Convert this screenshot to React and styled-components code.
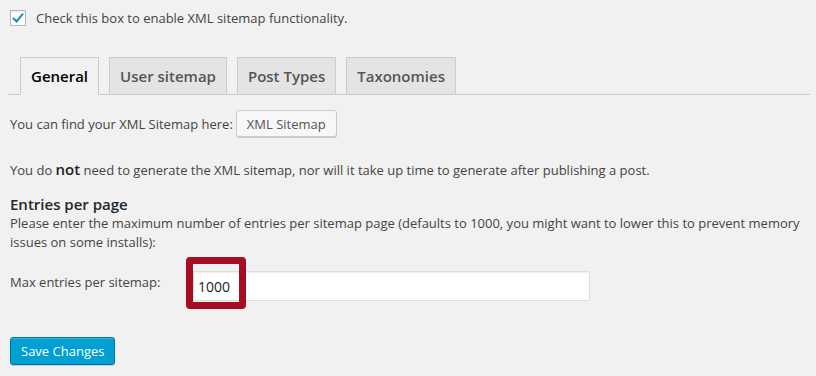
import React, { useState } from 'react';
import styled, { createGlobalStyle } from 'styled-components';

const GlobalStyle = createGlobalStyle`
  html, body {
    margin: 0;
    padding: 0;
    background: #f1f1f1;
  }
  body {
    font-family: "Open Sans", "Liberation Sans", sans-serif;
    font-size: 13px;
    color: #444;
  }
`;

const TABS = ['General', 'User sitemap', 'Post Types', 'Taxonomies'];

export default function App() {
  const [enabled, setEnabled] = useState(true);
  const [active, setActive] = useState('General');
  const [maxEntries, setMaxEntries] = useState('1000');

  return (
    <>
      <GlobalStyle />
      <Page>
        <CheckRow>
          <Checkbox
            type="checkbox"
            checked={enabled}
            onChange={() => setEnabled((v) => !v)}
          />
          <span>Check this box to enable XML sitemap functionality.</span>
        </CheckRow>

        <TabWrapper>
          {TABS.map((tab) => (
            <Tab
              key={tab}
              $active={tab === active}
              onClick={() => setActive(tab)}
            >
              {tab}
            </Tab>
          ))}
        </TabWrapper>

        <FindRow>
          <span>You can find your XML Sitemap here:</span>
          <SecondaryButton>XML Sitemap</SecondaryButton>
        </FindRow>

        <Paragraph>
          You do <Strong>not</Strong> need to generate the XML sitemap, nor will
          it take up time to generate after publishing a post.
        </Paragraph>

        <SectionTitle>Entries per page</SectionTitle>
        <Description>
          Please enter the maximum number of entries per sitemap page (defaults
          to 1000, you might want to lower this to prevent memory issues on some
          installs):
        </Description>

        <FieldRow>
          <Label htmlFor="max-entries">Max entries per sitemap:</Label>
          <InputWrap>
            <TextInput
              id="max-entries"
              value={maxEntries}
              onChange={(e) => setMaxEntries(e.target.value)}
            />
            <Highlight />
          </InputWrap>
        </FieldRow>

        <PrimaryButton>Save Changes</PrimaryButton>
      </Page>
    </>
  );
}

const Page = styled.div`
  padding: 10px 6px 12px 10px;
  width: 816px;
  box-sizing: border-box;
`;

const CheckRow = styled.label`
  display: flex;
  align-items: center;
  gap: 10px;
  height: 16px;
  line-height: 16px;
`;

const Checkbox = styled.input`
  appearance: none;
  margin: 0;
  width: 16px;
  height: 16px;
  border: 1px solid #b4b9be;
  background: #fff;
  box-shadow: inset 0 1px 2px rgba(0, 0, 0, 0.1);
  box-sizing: border-box;
  position: relative;
  cursor: pointer;

  &:checked::after {
    content: '';
    position: absolute;
    left: 4px;
    top: 0px;
    width: 4px;
    height: 9px;
    border: solid #1e8cbe;
    border-width: 0 2.5px 2.5px 0;
    transform: rotate(40deg);
  }
`;

const TabWrapper = styled.div`
  display: flex;
  gap: 10px;
  margin-top: 31px;
  margin-left: -2px;
  padding-left: 12px;
  border-bottom: 1px solid #ccc;
`;

const Tab = styled.div`
  padding: 6px 10px;
  font-size: 15px;
  line-height: 24px;
  font-weight: 600;
  border: 1px solid #ccc;
  border-bottom: none;
  background: ${(p) => (p.$active ? '#f1f1f1' : '#e4e4e4')};
  color: ${(p) => (p.$active ? '#000' : '#555')};
  margin-bottom: ${(p) => (p.$active ? '-1px' : '0')};
  padding-bottom: ${(p) => (p.$active ? '7px' : '6px')};
  cursor: pointer;
`;

const FindRow = styled.div`
  display: flex;
  align-items: center;
  gap: 3px;
  margin-top: 15px;
`;

const SecondaryButton = styled.button`
  height: 27px;
  padding: 0 10px;
  font-family: inherit;
  font-size: 13px;
  color: #555;
  background: #f7f7f7;
  border: 1px solid #ccc;
  border-radius: 3px;
  box-shadow: 0 1px 0 #ccc;
  cursor: pointer;
`;

const Paragraph = styled.p`
  margin: 22px 0 0;
  line-height: 20px;
`;

const Strong = styled.strong`
  font-size: 15px;
  font-weight: 600;
  color: #222;
`;

const SectionTitle = styled.h3`
  margin: 14px 0 0;
  font-size: 15px;
  line-height: 20px;
  font-weight: 600;
  color: #23282d;
`;

const Description = styled.p`
  margin: 0;
  line-height: 19px;
  width: 790px;
`;

const FieldRow = styled.div`
  display: flex;
  align-items: center;
  margin-top: 19px;
`;

const Label = styled.label`
  width: 183px;
  flex-shrink: 0;
  margin-top: -9px;
`;

const InputWrap = styled.div`
  position: relative;
`;

const TextInput = styled.input`
  display: block;
  width: 397px;
  height: 30px;
  box-sizing: border-box;
  padding: 3px 4px;
  font-family: inherit;
  font-size: 14px;
  color: #222;
  background: #fff;
  border: 1px solid #ddd;
  box-shadow: inset 0 1px 2px rgba(0, 0, 0, 0.07);
  outline: none;
`;

const Highlight = styled.div`
  position: absolute;
  left: -7px;
  top: -14px;
  width: 60px;
  height: 52px;
  box-sizing: border-box;
  border: 7px solid #a50e22;
  border-radius: 4px;
  pointer-events: none;
`;

const PrimaryButton = styled.button`
  display: block;
  margin-top: 36px;
  height: 28px;
  padding: 0 10px;
  font-family: inherit;
  font-size: 13px;
  color: #fff;
  background: #00a0d2;
  border: 1px solid #0073aa;
  border-radius: 3px;
  box-shadow: inset 0 1px 0 rgba(120, 200, 230, 0.5), 0 1px 0 rgba(0, 0, 0, 0.15);
  cursor: pointer;
`;
